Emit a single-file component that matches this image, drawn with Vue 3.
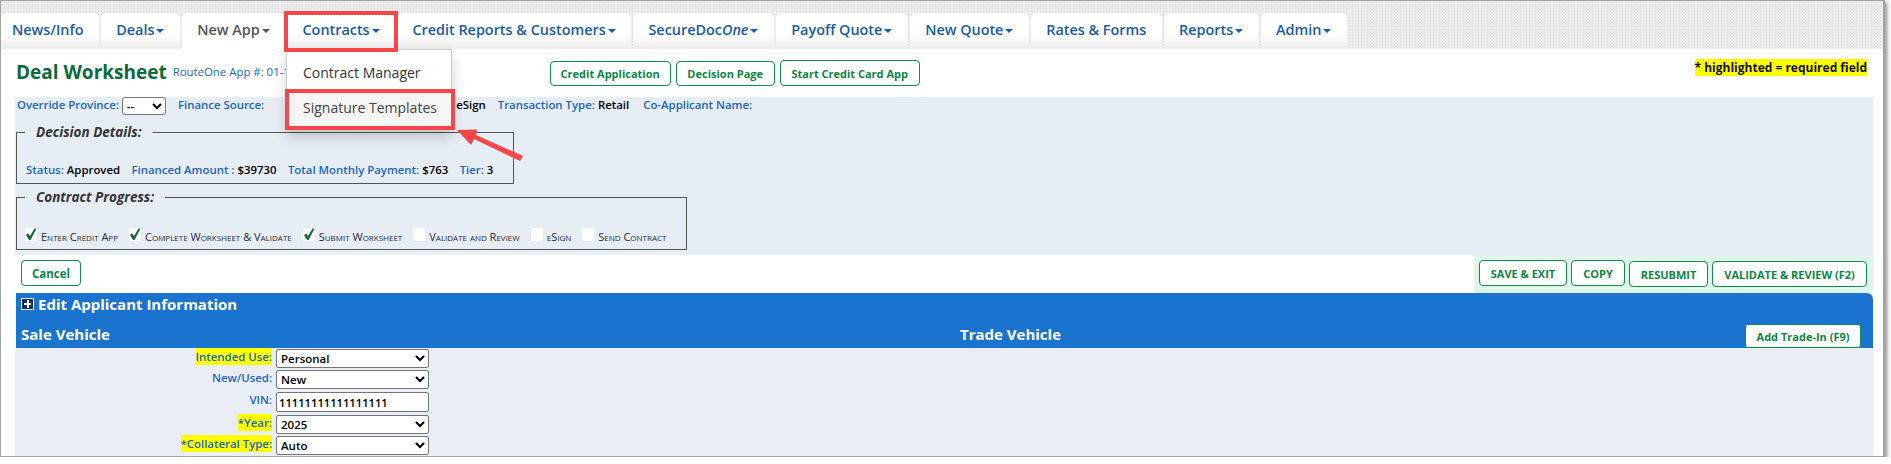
<template>
  <div class="frame">
    <div class="nav">
      <div v-for="t in tabs" :key="t.name" class="tab" :class="{ active: t.active, first: t.first }">
        {{ t.name }}<i v-if="t.em">{{ t.em }}</i><span v-if="t.caret" class="caret"></span>
      </div>
    </div>

    <div class="head">
      <div class="title">Deal Worksheet</div>
      <div class="app-no">RouteOne App #: 01-1-</div>
      <div class="head-btns">
        <button class="btn credit">Credit Application</button>
        <button class="btn decide">Decision Page</button>
        <button class="btn start">Start Credit Card App</button>
      </div>
      <div class="required">* highlighted = required field</div>
    </div>

    <div class="panel">
      <div class="info-row">
        <span class="lbl">Override Province:</span>
        <select class="province"><option>--</option></select>
        <span class="lbl finance">Finance Source:</span>
        <b class="esign">eSign</b>
        <span class="lbl trans">Transaction Type:</span> <b class="val">Retail</b>
        <span class="lbl coapp">Co-Applicant Name:</span>
      </div>

      <fieldset class="box decision">
        <legend>Decision Details:</legend>
        <div class="stats">
          <span><span class="lbl">Status:</span> <b>Approved</b></span>
          <span><span class="lbl">Financed Amount :</span> <b>$39730</b></span>
          <span><span class="lbl">Total Monthly Payment:</span> <b>$763</b></span>
          <span><span class="lbl">Tier:</span> <b>3</b></span>
        </div>
      </fieldset>

      <fieldset class="box progress">
        <legend>Contract Progress:</legend>
        <div class="steps">
          <div v-for="s in steps" :key="s.label" class="step">
            <span class="check">
              <svg v-if="s.done" width="12" height="13" viewBox="0 0 12 13">
                <path d="M1 7 L3.2 5.6 L5 8 L9.5 0.5 L11.5 0.5 L5.6 12 L4.2 12 Z" fill="#0d6b35" />
              </svg>
            </span>
            <span class="step-label">{{ s.label }}</span>
          </div>
        </div>
      </fieldset>
    </div>

    <div class="actions">
      <button class="btn cancel">Cancel</button>
      <div class="action-group">
        <button class="btn up save">SAVE &amp; EXIT</button>
        <button class="btn up copy">COPY</button>
        <button class="btn up low resubmit">RESUBMIT</button>
        <button class="btn up low validate">VALIDATE &amp; REVIEW (F2)</button>
      </div>
    </div>

    <div class="blue">
      <div class="edit-row">
        <span class="plus"></span>
        <span>Edit Applicant Information</span>
      </div>
      <div class="vehicle-row">
        <span class="sale">Sale Vehicle</span>
        <span class="trade">Trade Vehicle</span>
        <button class="btn trade-btn">Add Trade-In (F9)</button>
      </div>
    </div>

    <div class="form">
      <div class="form-row">
        <label><mark>Intended Use:</mark></label>
        <select><option>Personal</option></select>
      </div>
      <div class="form-row">
        <label>New/Used:</label>
        <select><option>New</option></select>
      </div>
      <div class="form-row vin">
        <label>VIN:</label>
        <input value="11111111111111111" />
      </div>
      <div class="form-row">
        <label><mark>*Year:</mark></label>
        <select><option>2025</option></select>
      </div>
      <div class="form-row">
        <label><mark>*Collateral Type:</mark></label>
        <select><option>Auto</option></select>
      </div>
    </div>

    <div class="menu">
      <div class="menu-item">Contract Manager</div>
      <div class="menu-item hover">Signature Templates</div>
    </div>
    <div class="mark-tab"></div>
    <div class="mark-item"></div>
    <svg class="arrow" width="70" height="34" viewBox="0 0 70 34">
      <path d="M1 1 L21 0.5 L20 6 L67 27 L64 32 L18 10 L15 16 Z" fill="#f7464a" />
    </svg>
  </div>
</template>

<script setup>
const tabs = [
  { name: 'News/Info', first: true },
  { name: 'Deals', caret: true },
  { name: 'New App', caret: true, active: true },
  { name: 'Contracts', caret: true },
  { name: 'Credit Reports & Customers', caret: true },
  { name: 'SecureDoc', em: 'One', caret: true },
  { name: 'Payoff Quote', caret: true },
  { name: 'New Quote', caret: true },
  { name: 'Rates & Forms' },
  { name: 'Reports', caret: true },
  { name: 'Admin', caret: true },
]

const steps = [
  { label: 'Enter Credit App', done: true },
  { label: 'Complete Worksheet & Validate', done: true },
  { label: 'Submit Worksheet', done: true },
  { label: 'Validate and Review', done: false },
  { label: 'eSign', done: false },
  { label: 'Send Contract', done: false },
]
</script>

<style>
html, body { margin: 0; background: #fff; overflow: hidden; }
</style>

<style scoped>
.frame {
  position: relative;
  box-sizing: border-box;
  width: 1885px;
  height: 457px;
  background: #fff;
  border: 1px solid #a3a3a3;
  border-right-width: 2px;
  box-shadow: 2px 2px 4px rgba(0, 0, 0, 0.45);
  font-family: "Open Sans", sans-serif;
  font-size: 11.4px;
  overflow: hidden;
}

.nav {
  display: flex;
  gap: 2px;
  height: 48px;
  box-sizing: border-box;
  padding-top: 12px;
  background-color: #ececec;
  background-image: radial-gradient(#d9d9d9 0.6px, transparent 0.7px);
  background-size: 3px 3px;
}
.tab {
  display: flex;
  align-items: center;
  padding: 0 15.4px 3px;
  border-radius: 5px 5px 0 0;
  background: linear-gradient(#fff 60%, #ececec);
  color: #1a5aa8;
  font-size: 14.4px;
  font-weight: 600;
  white-space: pre;
}
.tab.first { padding-left: 11px; }
.tab.active { background: #fff; color: #555; }
.tab i { font-weight: 600; }
.caret {
  margin-left: 2px;
  margin-top: 2px;
  border: 4px solid transparent;
  border-top-color: currentColor;
  border-bottom: 0;
}

.head {
  display: flex;
  height: 48px;
  box-sizing: border-box;
  padding-left: 15px;
}
.title {
  margin-top: 10px;
  color: #0b6a3c;
  font-size: 19px;
  font-weight: 700;
  line-height: 27px;
}
.app-no {
  margin: 15px 0 0 6px;
  width: 377px;
  color: #1a66c0;
  font-size: 11.4px;
  line-height: 16px;
}
.head-btns {
  display: flex;
  gap: 5px;
  margin-top: 12px;
  height: 25px;
}
.required {
  margin: 10px 16px 0 auto;
  height: 17px;
  background: #ff0;
  color: #111;
  font-size: 12px;
  font-weight: 700;
  line-height: 17px;
}

.btn {
  box-sizing: border-box;
  height: 26px;
  padding: 0;
  background: #fff;
  border: 1px solid #0c8f4a;
  border-radius: 4px;
  color: #0c8544;
  font-family: inherit;
  font-size: 11px;
  font-weight: 700;
  white-space: nowrap;
}
.head-btns .btn { height: 25px; }
.head-btns .credit { width: 121px; }
.head-btns .decide { width: 99px; }
.head-btns .start { width: 140px; height: 26px; margin-top: -1px; }

.panel {
  margin: 0 10px 0 14px;
  height: 158px;
  background: #e7edf5;
  overflow: hidden;
}
.lbl { color: #1a66c0; font-weight: 600; }
b { color: #000; font-weight: 600; }
.info-row {
  display: flex;
  align-items: flex-start;
  height: 18px;
  line-height: 16px;
  white-space: pre;
  padding-left: 2px;
}
.province {
  width: 44px;
  height: 18px;
  margin-left: 3px;
  background: #fff;
  border: 1px solid #767676;
  border-radius: 3px;
  font-family: inherit;
  font-size: 11px;
  font-weight: 600;
}
.finance { margin-left: 12px; }
.esign { margin-left: 192px; }
.trans { margin-left: 12px; }
.val { margin-left: 3px; }
.coapp { margin-left: 14px; }

.box {
  box-sizing: border-box;
  margin: 0 0 0 1px;
  padding: 0;
  border: 1px solid #555;
  min-width: 0;
}
.box legend {
  margin-left: 8px;
  padding: 0 11px;
  color: #333;
  font-size: 13.5px;
  font-style: italic;
  font-weight: 700;
  line-height: 18px;
}
.decision { width: 498px; height: 61px; margin-top: 8px; }
.progress { width: 671px; height: 62px; margin-top: 4px; }
.stats {
  display: flex;
  gap: 11.4px;
  margin-top: 21px;
  padding-left: 9px;
  white-space: pre;
  font-size: 11.4px;
}
.steps {
  display: flex;
  margin-top: 22px;
  padding-left: 8px;
}
.step { display: flex; align-items: flex-start; margin-right: 11px; }
.check {
  width: 12px;
  height: 13px;
  margin-right: 4px;
  background: #fff;
}
.check svg { display: block; }
.step-label {
  margin-top: 2px;
  color: #1f2a38;
  font-size: 11px;
  font-variant: small-caps;
  line-height: 14px;
  white-space: nowrap;
}

.actions {
  display: flex;
  justify-content: space-between;
  height: 38px;
  margin-right: 10px;
  padding-left: 20px;
}
.cancel { width: 60px; margin-top: 5px; font-size: 11.5px; }
.action-group {
  display: flex;
  gap: 4px;
  padding: 5px 6px 0 5px;
  background: #e0f5e9;
  border-radius: 0 0 4px 4px;
}
.low { margin-top: 1px; }
.save { width: 88px; }
.copy { width: 54px; }
.resubmit { width: 79px; }
.validate { width: 155px; }

.blue {
  margin: 0 10px 0 15px;
  height: 55px;
  background: #1a73cf;
  border-radius: 0 6px 0 0;
  color: #fff;
  font-weight: 700;
}
.edit-row {
  display: flex;
  align-items: center;
  gap: 4px;
  height: 21px;
  margin-bottom: 9px;
  padding-left: 5px;
  font-size: 15px;
  line-height: 20px;
}
.plus {
  position: relative;
  box-sizing: border-box;
  width: 13px;
  height: 12px;
  background: #0d2f6b;
  border: 1px solid #fff;
}
.plus::before,
.plus::after {
  content: "";
  position: absolute;
  background: #fff;
}
.plus::before { left: 2px; right: 2px; top: 4px; height: 2px; }
.plus::after { top: 1px; bottom: 1px; left: 4.5px; width: 2px; }
.vehicle-row {
  display: flex;
  align-items: flex-end;
  height: 25px;
  padding-left: 5px;
  font-size: 15px;
  font-weight: 700;
}
.sale { width: 939px; line-height: 27px; }
.trade { line-height: 27px; }
.trade-btn {
  height: 24px;
  width: 116px;
  margin-left: auto;
  margin-right: 12px;
  border-radius: 3px;
}

.form {
  margin: 0 10px 0 14px;
  height: 108px;
  padding-top: 1px;
  box-sizing: border-box;
  background: #e9eef6;
}
.form-row {
  display: flex;
  align-items: flex-start;
  height: 21px;
}
.form-row.vin { height: 23px; margin-top: 1px; }
.form-row label {
  width: 257px;
  color: #1a66c0;
  font-size: 11.4px;
  font-weight: 600;
  line-height: 16px;
  text-align: right;
}
mark { background: #ff0; color: #1a66c0; padding: 1px 0; }
.form-row select,
.form-row input {
  box-sizing: border-box;
  width: 153px;
  height: 19px;
  margin: 0 0 0 4px;
  background: #fff;
  border: 1px solid #767676;
  border-radius: 2px;
  color: #000;
  font-family: inherit;
  font-size: 11.5px;
  font-weight: 600;
}
.form-row input { height: 20px; padding: 0 2px; font-size: 11.2px; }

.menu {
  position: absolute;
  left: 285px;
  top: 48px;
  box-sizing: border-box;
  width: 166px;
  height: 82px;
  padding-top: 5px;
  background: #fff;
  border: 1px solid #ccc;
  box-shadow: 0 6px 12px rgba(0, 0, 0, 0.18);
  color: #333;
  font-size: 14px;
}
.menu-item {
  height: 35px;
  padding-left: 16px;
  line-height: 36px;
}
.menu-item.hover { height: 38px; background: #f5f5f5; color: #444; }
.mark-tab,
.mark-item {
  position: absolute;
  box-sizing: border-box;
  border: 4px solid #f7464a;
}
.mark-tab { left: 283px; top: 10px; width: 114px; height: 41px; }
.mark-item { left: 284px; top: 88px; width: 170px; height: 41px; }
.arrow { position: absolute; left: 455px; top: 128px; }
</style>
